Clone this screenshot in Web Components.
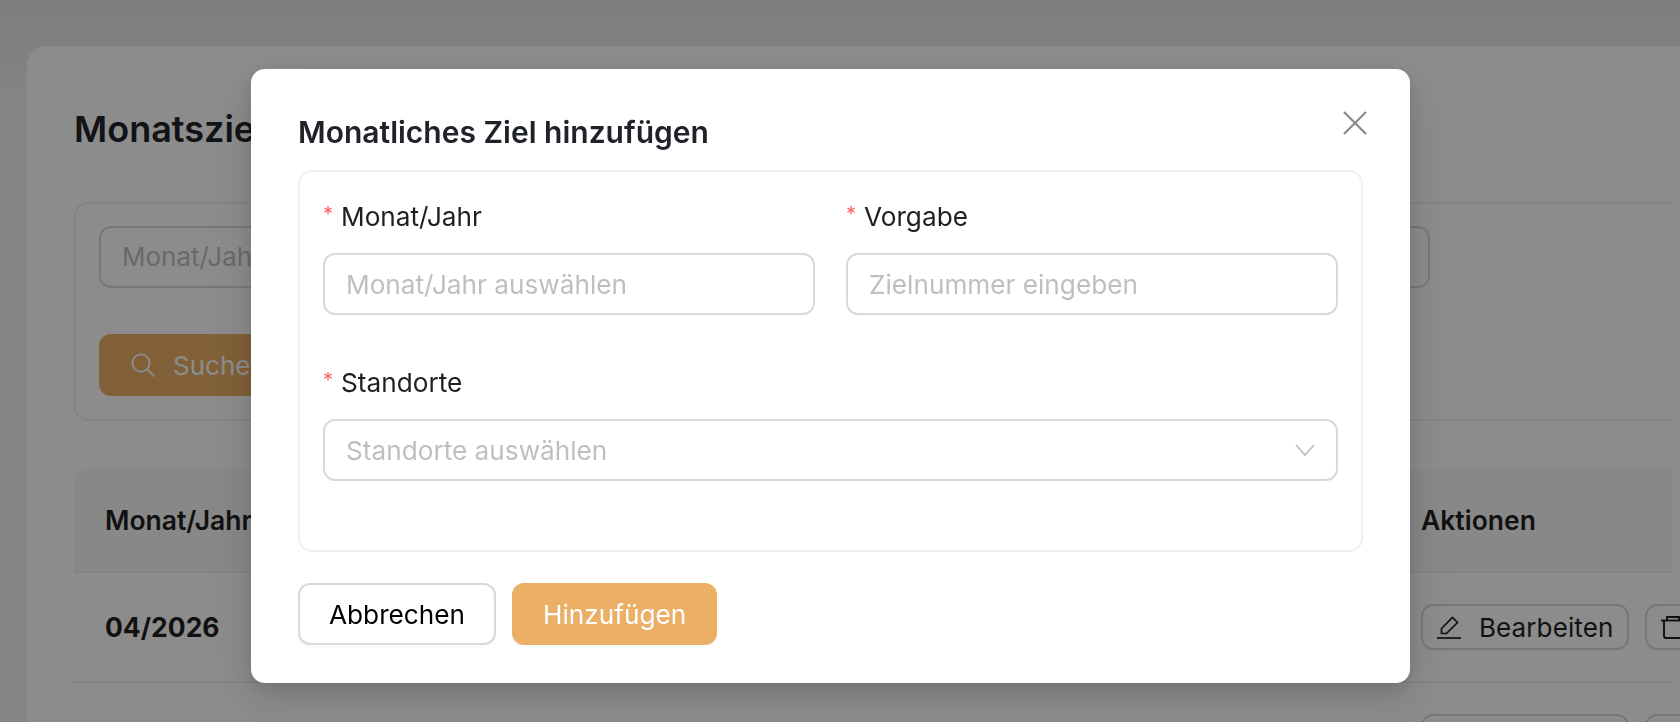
<!DOCTYPE html>
<html lang="de">
<head>
<meta charset="utf-8">
<title>Monatsziele</title>
<style>
  html, body { margin: 0; height: 100%; overflow: hidden; }
  body { font-family: Inter, "Liberation Sans", sans-serif; color: #1f1f1f; }
</style>
</head>
<body>
<goals-page>
  <filter-panel></filter-panel>
  <goals-table></goals-table>
</goals-page>

<goal-modal title-text="Monatliches Ziel hinzufügen">
  <div slot="fields" style="display:grid;grid-template-columns:1fr 1fr;column-gap:31px;row-gap:46px">
    <form-field label="Monat/Jahr"><text-box placeholder="Monat/Jahr auswählen"></text-box></form-field>
    <form-field label="Vorgabe"><text-box placeholder="Zielnummer eingeben"></text-box></form-field>
    <form-field label="Standorte" style="grid-column:1 / 3"><text-box placeholder="Standorte auswählen" chevron></text-box></form-field>
  </div>
  <ui-button slot="footer">Abbrechen</ui-button>
  <ui-button slot="footer" primary>Hinzufügen</ui-button>
</goal-modal>

<script>
const pageTemplate = document.createElement("template")
pageTemplate.innerHTML = /*html*/ `
  <style>
    :host {
      display: block;
      box-sizing: border-box;
      height: 722px;
      overflow: hidden;
      padding: 46px 0 0 27px;
      background: linear-gradient(#e5e5e5 0, #eaeaea 46px, #f2f2f2 110px);
    }
    .card {
      height: 800px;
      margin-right: -40px;
      padding: 0 47px;
      background: #fff;
      border-radius: 20px 0 0 0;
    }
    h1 {
      margin: 0;
      padding-top: 59px;
      height: 97px;
      font-size: 36px;
      line-height: 48px;
      font-weight: 600;
      color: #1f2329;
    }
  </style>
  <div class="card">
    <h1>Monatsziele</h1>
    <slot></slot>
  </div>
`

class GoalsPage extends HTMLElement {
  constructor() {
    super()
    this.attachShadow({ mode: "open" }).appendChild(pageTemplate.content.cloneNode(true))
  }
}

const filterTemplate = document.createElement("template")
filterTemplate.innerHTML = /*html*/ `
  <style>
    :host {
      display: block;
      box-sizing: border-box;
      height: 219px;
      padding: 22px 23px;
      border: 2px solid #f0f0f0;
      border-right: 0;
      border-radius: 14px 0 0 14px;
    }
    .input {
      box-sizing: border-box;
      width: 1331px;
      height: 62px;
      padding: 0 21px;
      border: 2px solid #d9d9d9;
      border-radius: 12px;
      font-size: 26px;
      line-height: 58px;
      color: #bfbfbf;
    }
    .search {
      box-sizing: border-box;
      display: flex;
      align-items: center;
      gap: 18px;
      width: 400px;
      height: 62px;
      margin-top: 46px;
      padding-left: 32px;
      border-radius: 12px;
      background: #ebb066;
      color: #fff;
      font-size: 26px;
    }
    svg { width: 24px; height: 24px; flex: none; }
  </style>
  <div class="input">Monat/Jahr</div>
  <div class="search">
    <svg viewBox="0 0 24 24" fill="none" stroke="currentColor" stroke-width="1.9">
      <circle cx="10" cy="10" r="8.6"/><path d="M16 16l7.4 7.4"/>
    </svg>
    <span>Suchen</span>
  </div>
`

class FilterPanel extends HTMLElement {
  constructor() {
    super()
    this.attachShadow({ mode: "open" }).appendChild(filterTemplate.content.cloneNode(true))
  }
}

const tableTemplate = document.createElement("template")
tableTemplate.innerHTML = /*html*/ `
  <style>
    :host { display: block; margin-top: 48px; }
    .row {
      display: grid;
      grid-template-columns: 1347px 1fr;
      align-items: center;
      box-sizing: border-box;
      border-bottom: 2px solid #f0f0f0;
    }
    .head {
      height: 104px;
      background: #f8f8f8;
      border-radius: 14px 0 0 0;
      font-size: 26.5px;
      font-weight: 600;
    }
    .body {
      height: 110px;
      font-size: 26.5px;
      font-weight: 700;
    }
    .first { padding-left: 31px; }
    .actions { display: flex; gap: 16px; font-weight: 400; }
    .btn {
      box-sizing: border-box;
      display: flex;
      align-items: center;
      gap: 18px;
      height: 46px;
      width: 208px;
      padding-left: 14px;
      border: 2px solid #d9d9d9;
      border-radius: 12px;
      font-size: 26px;
      letter-spacing: .1px;
    }
    .btn svg { width: 24px; height: 24px; flex: none; }
  </style>
  <div class="row head"><div class="first">Monat/Jahr</div><div>Aktionen</div></div>
  <div class="row body">
    <div class="first">04/2026</div>
    <div class="actions">
      <div class="btn">
        <svg viewBox="0 0 24 24" fill="none" stroke="currentColor" stroke-width="1.7">
          <path d="M0 23h24"/><path d="M4.5 18.5V13.5L15.5 2.5l5 5L9.5 18.5z"/>
        </svg>
        <span>Bearbeiten</span>
      </div>
      <div class="btn">
        <svg viewBox="0 0 24 24" fill="none" stroke="currentColor" stroke-width="1.9">
          <path d="M0 5.5h24"/><path d="M6 5.5V2h12v3.5"/><path d="M3 5.5V21a2 2 0 002 2h14a2 2 0 002-2V5.5"/>
        </svg>
      </div>
    </div>
  </div>
  <div class="row body">
    <div class="first"></div>
    <div class="actions"><div class="btn"></div><div class="btn"></div></div>
  </div>
`

class GoalsTable extends HTMLElement {
  constructor() {
    super()
    this.attachShadow({ mode: "open" }).appendChild(tableTemplate.content.cloneNode(true))
  }
}

const modalTemplate = document.createElement("template")
modalTemplate.innerHTML = /*html*/ `
  <style>
    :host {
      position: fixed;
      inset: 0;
      display: block;
      background: rgba(0,0,0,.45);
    }
    .dialog {
      position: absolute;
      left: 251px;
      top: 69px;
      box-sizing: border-box;
      width: 1159px;
      height: 614px;
      padding: 0 47px;
      background: #fff;
      border-radius: 14px;
      box-shadow: 0 12px 32px rgba(0,0,0,.1), 0 6px 16px rgba(0,0,0,.08), 0 18px 56px 16px rgba(0,0,0,.05);
    }
    .header {
      display: flex;
      justify-content: space-between;
      height: 101px;
    }
    h2 {
      margin: 0;
      padding-top: 43px;
      font-size: 30px;
      line-height: 40px;
      font-weight: 600;
      color: #1f2329;
    }
    .close {
      width: 24px;
      height: 24px;
      margin: 42px -4px 0 0;
      color: #8a8a8a;
    }
    .body {
      box-sizing: border-box;
      height: 382px;
      padding: 23px 23px;
      border: 2px solid #f0f0f0;
      border-radius: 14px;
    }
    .footer {
      display: flex;
      gap: 16px;
      margin-top: 31px;
    }
  </style>
  <div class="dialog">
    <div class="header">
      <h2></h2>
      <svg class="close" viewBox="0 0 24 24" fill="none" stroke="currentColor" stroke-width="2.2"><path d="M1 1l22 22M23 1L1 23"/></svg>
    </div>
    <div class="body"><slot name="fields"></slot></div>
    <div class="footer"><slot name="footer"></slot></div>
  </div>
`

class GoalModal extends HTMLElement {
  constructor() {
    super()
    this.attachShadow({ mode: "open" }).appendChild(modalTemplate.content.cloneNode(true))
  }

  connectedCallback() {
    this.shadowRoot.querySelector("h2").textContent = this.getAttribute("title-text")
  }
}

const fieldTemplate = document.createElement("template")
fieldTemplate.innerHTML = /*html*/ `
  <style>
    :host { display: block; }
    .label {
      display: flex;
      height: 42px;
      margin-bottom: 16px;
      align-items: center;
      font-size: 26.2px;
      color: #1f1f1f;
    }
    .star {
      width: 18px;
      color: #ff5f61;
      font-size: 20px;
      line-height: 1;
      margin-top: -4px;
    }
  </style>
  <div class="label"><span class="star">*</span><span class="text"></span></div>
  <slot></slot>
`

class FormField extends HTMLElement {
  constructor() {
    super()
    this.attachShadow({ mode: "open" }).appendChild(fieldTemplate.content.cloneNode(true))
  }

  connectedCallback() {
    this.shadowRoot.querySelector(".text").textContent = this.getAttribute("label")
  }
}

const boxTemplate = document.createElement("template")
boxTemplate.innerHTML = /*html*/ `
  <style>
    :host {
      display: flex;
      align-items: center;
      justify-content: space-between;
      box-sizing: border-box;
      height: 62px;
      padding: 0 21px;
      border: 2px solid #d9d9d9;
      border-radius: 12px;
      background: #fff;
      font-size: 26.2px;
      color: #bfbfbf;
    }
    svg { width: 20px; height: 12px; }
  </style>
  <span class="text"></span>
  <svg viewBox="0 0 20 12" fill="none" stroke="#bfbfbf" stroke-width="1.8" hidden><path d="M1 1l9 10 9-10"/></svg>
`

class TextBox extends HTMLElement {
  constructor() {
    super()
    this.attachShadow({ mode: "open" }).appendChild(boxTemplate.content.cloneNode(true))
  }

  connectedCallback() {
    this.shadowRoot.querySelector(".text").textContent = this.getAttribute("placeholder")
    if (!this.hasAttribute("chevron")) this.shadowRoot.querySelector("svg").remove()
    else this.shadowRoot.querySelector("svg").removeAttribute("hidden")
  }
}

const buttonTemplate = document.createElement("template")
buttonTemplate.innerHTML = /*html*/ `
  <style>
    :host {
      display: flex;
      align-items: center;
      box-sizing: border-box;
      height: 62px;
      padding: 0 29px;
      border: 2px solid #d9d9d9;
      border-radius: 12px;
      background: #fff;
      color: #000;
      font-size: 26.2px;
      box-shadow: 0 3px 0 rgba(0,0,0,.02);
    }
    :host([primary]) {
      padding: 0 31px;
      border: 0;
      background: #ebb066;
      color: #fff;
      box-shadow: 0 3px 0 rgba(5,145,255,.02);
    }
  </style>
  <slot></slot>
`

class UiButton extends HTMLElement {
  constructor() {
    super()
    this.attachShadow({ mode: "open" }).appendChild(buttonTemplate.content.cloneNode(true))
  }
}

customElements.define("goals-page", GoalsPage)
customElements.define("filter-panel", FilterPanel)
customElements.define("goals-table", GoalsTable)
customElements.define("goal-modal", GoalModal)
customElements.define("form-field", FormField)
customElements.define("text-box", TextBox)
customElements.define("ui-button", UiButton)
</script>
</body>
</html>
